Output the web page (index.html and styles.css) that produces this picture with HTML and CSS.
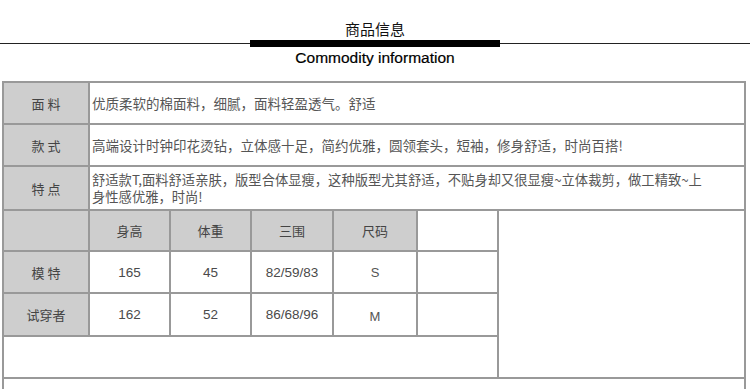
FILE: index.html
```html
<!DOCTYPE html>
<html lang="zh">
<head>
<meta charset="utf-8">
<link rel="stylesheet" href="styles.css">
</head>
<body>
<div class="head">
  <div class="title">商品信息</div>
  <div class="rule"><div class="bar"></div></div>
  <div class="sub">Commodity information</div>
</div>
<div class="tbl">
  <div class="c lab">面 料</div>
  <div class="c txt span6">优质柔软的棉面料，细腻，面料轻盈透气。舒适</div>
  <div class="c lab">款 式</div>
  <div class="c txt span6">高端设计时钟印花烫钻，立体感十足，简约优雅，圆领套头，短袖，修身舒适，时尚百搭!</div>
  <div class="c lab">特 点</div>
  <div class="c txt span6 two"><div class="ln">舒适款T,面料舒适亲肤，版型合体显瘦，这种版型尤其舒适，不贴身却又很显瘦~立体裁剪，做工精致~上</div><div class="ln">身性感优雅，时尚!</div></div>

  <div class="c lab"></div>
  <div class="c lab">身高</div>
  <div class="c lab">体重</div>
  <div class="c lab">三围</div>
  <div class="c lab">尺码</div>
  <div class="c"></div>
  <div class="c big"></div>

  <div class="c lab">模 特</div>
  <div class="c">165</div>
  <div class="c">45</div>
  <div class="c">82/59/83</div>
  <div class="c sz">S</div>
  <div class="c"></div>

  <div class="c lab">试穿者</div>
  <div class="c">162</div>
  <div class="c">52</div>
  <div class="c">86/68/96</div>
  <div class="c sz low">M</div>
  <div class="c"></div>

  <div class="c span6"></div>

  <div class="c span7"></div>
</div>
</body>
</html>
```

FILE: styles.css
```css
html, body {
  margin: 0;
  padding: 0;
  background: #fff;
}
body {
  font-family: "Liberation Sans", "Noto Sans CJK SC", sans-serif;
  color: #444;
}
.head {
  padding-top: 19px;
}
.title {
  text-align: center;
  font-family: "Noto Sans CJK SC", sans-serif;
  font-size: 15px;
  line-height: 20px;
  color: #111;
}
.rule {
  margin-top: 1px;
  height: 7px;
  display: flex;
  justify-content: center;
  background: linear-gradient(#fff 0, #fff 3px, #222 3px, #222 4.4px, #fff 4.4px);
}
.bar {
  width: 250px;
  height: 7px;
  background: #000;
}
.sub {
  text-align: center;
  font-family: "Liberation Sans", sans-serif;
  font-size: 15.5px;
  line-height: 17px;
  color: #000;
  margin-top: 2px;
  -webkit-text-stroke: 0.2px #000;
}
.tbl {
  margin: 15px 0 0 2px;
  width: 744px;
  box-sizing: border-box;
  display: grid;
  grid-template-columns: 84px 79px 79px 80px 82px 79px 245px;
  grid-template-rows: 40px 40px 42px 39px 40px 41px 40px 40px;
  gap: 2px;
  padding: 2px 2px 0 2px;
  background: #999;
}
.c {
  background: #fff;
  display: flex;
  align-items: center;
  justify-content: center;
  font-size: 13.5px;
  color: #4a4a4a;
}
.lab {
  background: #cecece;
  font-family: "Noto Sans CJK SC", sans-serif;
  font-size: 13px;
  color: #444;
}
.txt {
  justify-content: flex-start;
  padding-left: 2px;
  font-family: "Noto Sans CJK SC", sans-serif;
  font-size: 13.5px;
  color: #555;
  white-space: nowrap;
}
.two {
  flex-direction: column;
  align-items: flex-start;
  justify-content: center;
  font-size: 13.3px;
}
.ln {
  height: 17px;
  line-height: 17px;
}
.span6 {
  grid-column: span 6;
}
.span7 {
  grid-column: span 7;
}
.big {
  grid-row: span 4;
}
.sz {
  color: #555;
  font-family: "Liberation Sans", sans-serif;
  font-size: 13px;
}
.low {
  padding-top: 4px;
}
```
